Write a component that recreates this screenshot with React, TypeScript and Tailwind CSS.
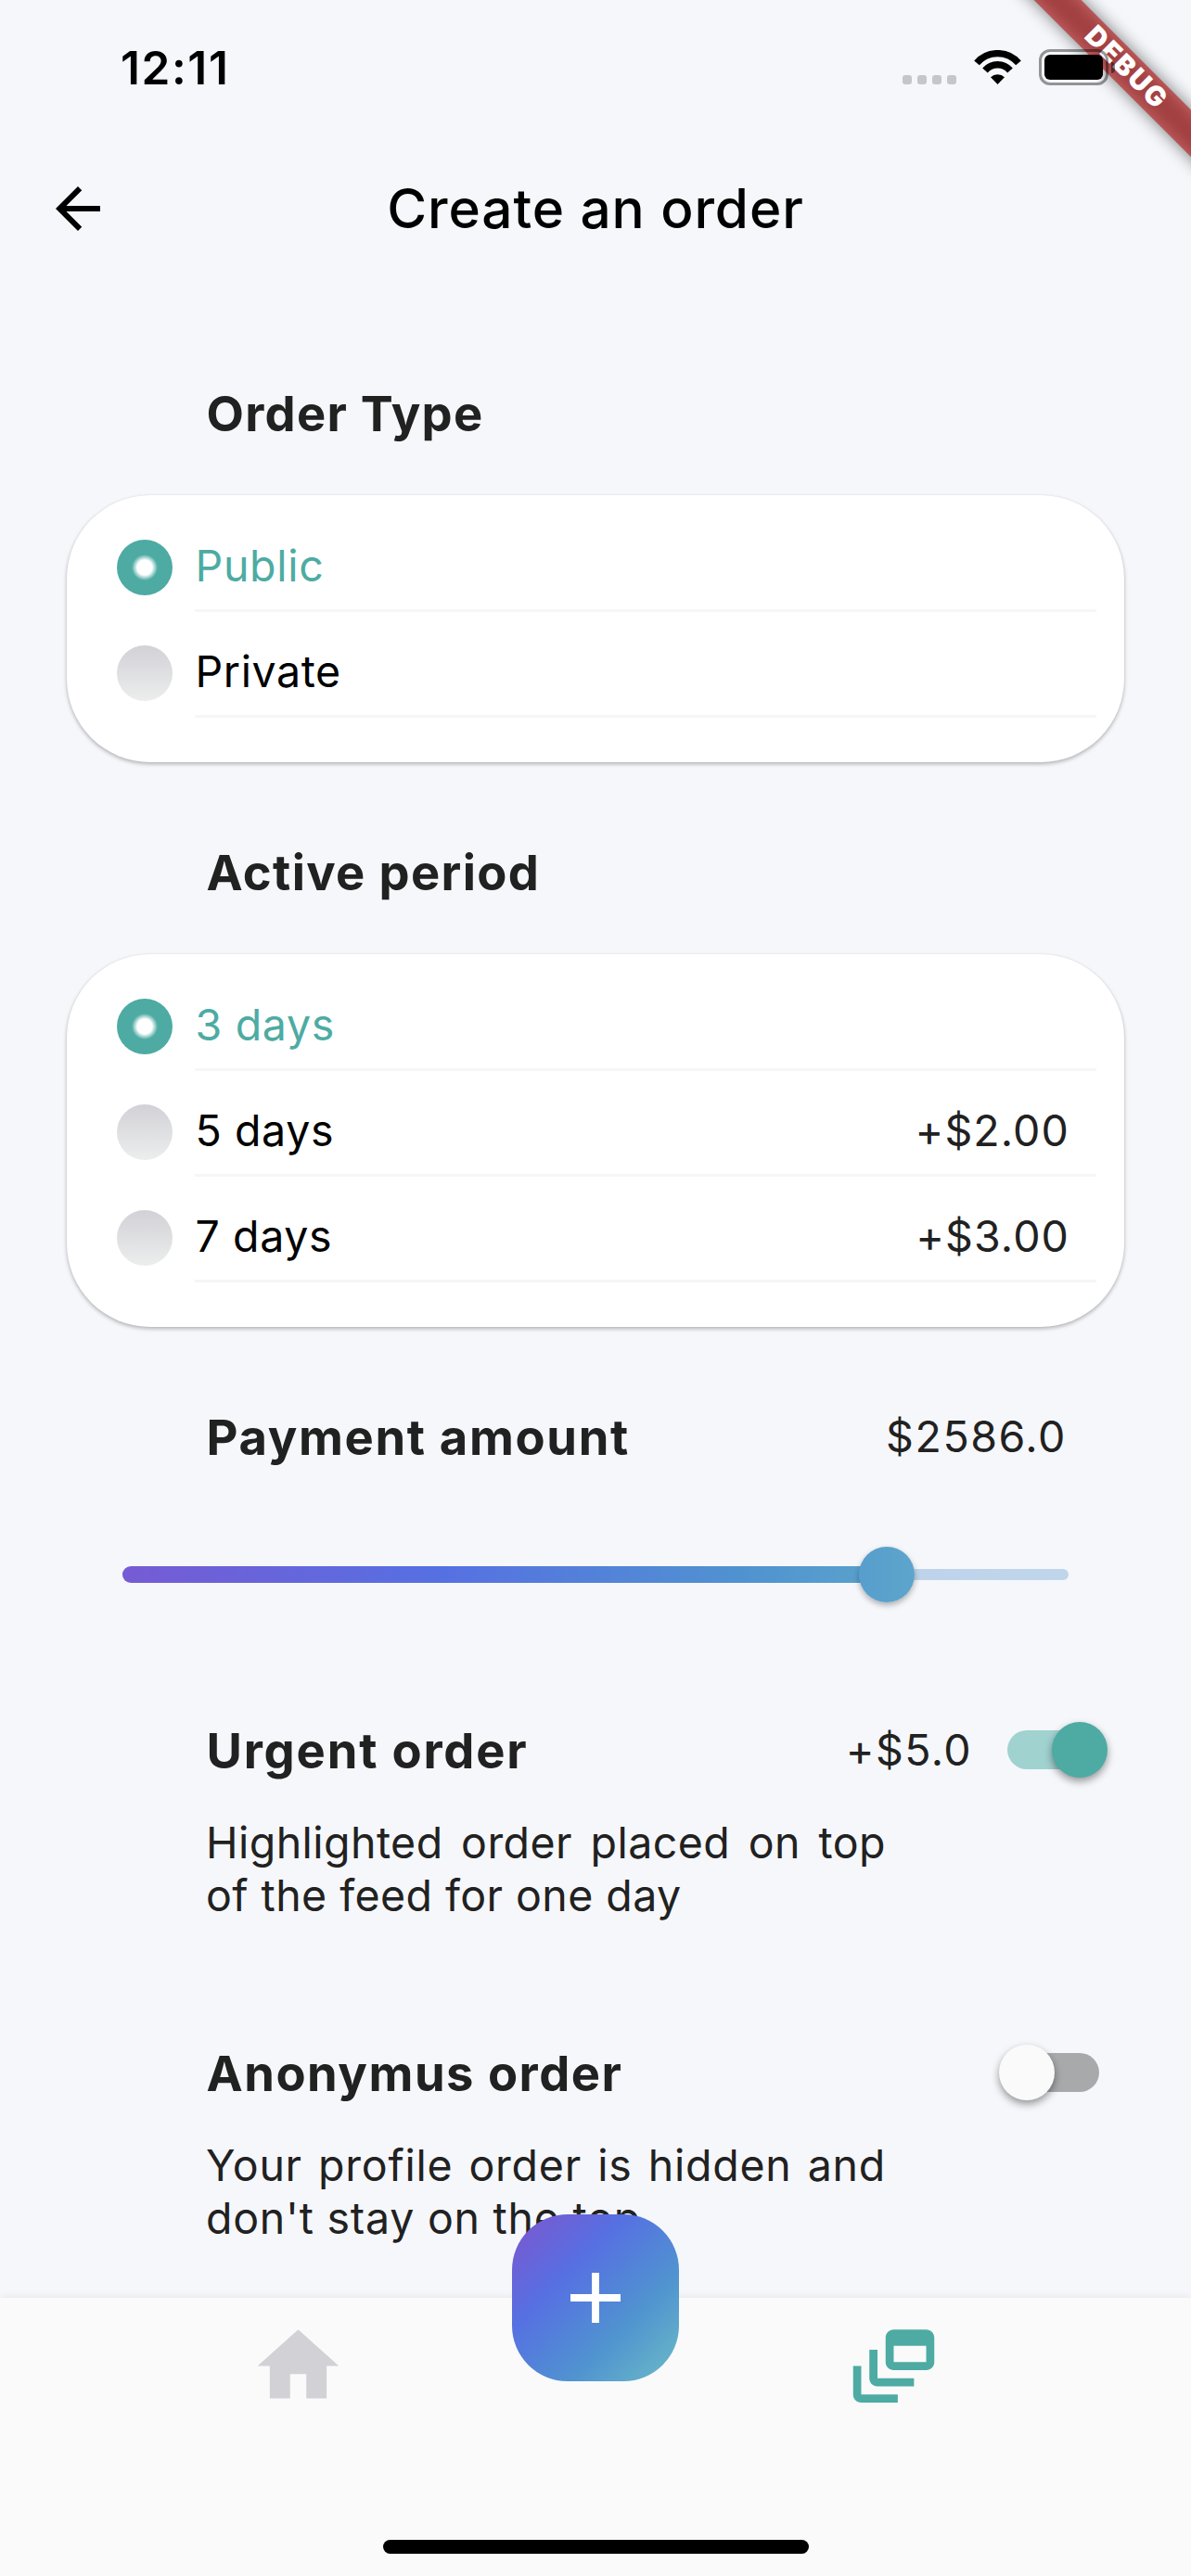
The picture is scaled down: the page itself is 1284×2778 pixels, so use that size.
import type { ReactNode } from "react";
import { MdArrowBack, MdDynamicFeed } from "react-icons/md";

function StatusBar() {
  return (
    <div className="flex h-[141px] shrink-0 items-start justify-between pr-[82px] pl-[130px]">
      <span className="mt-[43px] text-[49.5px] leading-[60px] font-semibold tracking-[1.6px] text-black">12:11</span>
      <div className="relative z-30 mt-[53px] flex h-[39px] items-start">
        <div className="mt-[28px] flex gap-[6px]">
          {[0, 1, 2, 3].map((i) => (
            <span key={i} className="size-[10px] rounded-[3px] bg-[#c5c6ca]" />
          ))}
        </div>
        <svg className="mt-px ml-[19px] h-[37px] w-[51px]" viewBox="0 0 51 37" fill="none">
          <path d="M3 13.9 A29.8 29.8 0 0 1 48 13.9" stroke="#000" strokeWidth="7.4" />
          <path d="M12 22 A17.7 17.7 0 0 1 39 22" stroke="#000" strokeWidth="7.4" />
          <path d="M18 29.3 A11 11 0 0 1 33 29.3 L25.5 37 Z" fill="#000" />
        </svg>
        <div className="ml-[19px] flex items-center">
          <div className="h-[39px] w-[75px] rounded-[12px] border-3 border-black/40 p-[3px]">
            <div className="h-full w-full rounded-[6px] bg-black" />
          </div>
          <div className="ml-[3px] h-[12px] w-[4px] rounded-r-full bg-black/45" />
        </div>
      </div>
    </div>
  );
}

function DebugBanner() {
  return (
    <div className="pointer-events-none absolute top-0 right-0 z-20 size-[240px] overflow-hidden">
      <div className="absolute top-[54.7px] -left-[31px] h-[36.4px] w-[400px] rotate-45 bg-black/50 blur-[9px]" />
      <div className="absolute top-[54.7px] -left-[31px] flex h-[36.4px] w-[400px] rotate-45 items-center justify-center bg-[#b71c1c]/63 pb-[2px]">
        <span className="pl-[2px] text-[29.6px] leading-none font-black tracking-[1.9px] text-white">DEBUG</span>
      </div>
    </div>
  );
}

function Heading({ children, className }: { children: ReactNode; className: string }) {
  return <h2 className={`text-[52.5px] leading-[64px] font-bold whitespace-nowrap text-[#212121] ${className}`}>{children}</h2>;
}

type Option = { label: string; price?: string; selected?: boolean };

function OptionCard({ options }: { options: Option[] }) {
  return (
    <div className="mx-[72px] rounded-[90px] bg-white pt-[12px] pr-[30px] pb-[48px] pl-[54px] shadow-[0_2px_4px_rgba(0,0,0,0.28),0_0_2px_rgba(0,0,0,0.06)]">
      {options.map((o) => (
        <div key={o.label} className="flex h-[114px] gap-[24px]">
          {o.selected ? (
            <span className="mt-[36px] size-[60px] shrink-0 rounded-full bg-[radial-gradient(circle,#ffffff_0px,#ffffff_8px,#4daba3_14px)]" />
          ) : (
            <span className="mt-[36px] size-[60px] shrink-0 rounded-full bg-linear-to-b from-[#d2d1d7] to-[#eceeed]" />
          )}
          <div className="flex flex-1 items-center justify-between border-b-3 border-[#f6f6f7] pt-[18px] pr-[29px] pl-[0.5px] text-[46.5px] leading-[57px]">
            <span className={o.selected ? "tracking-[0.7px] text-[#4daba3]" : "tracking-[0.6px] text-black"}>{o.label}</span>
            <span className="tracking-[1.1px] text-[#212121]">{o.price}</span>
          </div>
        </div>
      ))}
    </div>
  );
}

function Slider() {
  return (
    <div className="relative mx-[132px] flex h-[60px] items-center">
      <div className="h-[12px] w-full rounded-full bg-linear-to-r from-[#b9c6ec] to-[#bfd6ea]" />
      <div className="absolute top-[21px] left-0 h-[18px] w-[825px] rounded-l-full bg-[linear-gradient(90deg,#765bd4_0px,#5670e2_340px,#5093d0_675px,#5ba3cc_825px)]" />
      <div className="absolute top-0 left-[794px] size-[60px] rounded-full bg-linear-to-r from-[#579ecd] to-[#5da5cb] shadow-[0_3px_6px_rgba(0,0,0,0.3)]" />
    </div>
  );
}

function Toggle({ on }: { on?: boolean }) {
  return on ? (
    <div className="relative h-[42px] w-[99px] rounded-full bg-[#a0d2cf]">
      <div className="absolute -top-[9px] left-[48px] size-[60px] rounded-full bg-[#4daba3] shadow-[0_4px_9px_rgba(0,0,0,0.4)]" />
    </div>
  ) : (
    <div className="relative h-[42px] w-[99px] rounded-full bg-[#a8a9aa]">
      <div className="absolute -top-[9px] -left-[9px] size-[60px] rounded-full bg-[#fafafa] shadow-[0_4px_9px_rgba(0,0,0,0.4)]" />
    </div>
  );
}

function BottomNav() {
  return (
    <nav className="absolute inset-x-0 bottom-0 z-10 flex h-[300px] flex-col items-center bg-[#fafafa] shadow-[0_-1px_8px_rgba(0,0,0,0.07)]">
      <div className="flex w-full pt-[21px]">
        <div className="flex flex-1 justify-center">
          <svg className="size-[105px]" viewBox="0 0 24 24" fill="#d1d1d6">
            <path d="M10 20v-6h4v6h5v-8h3L12 3 2 12h3v8z" />
          </svg>
        </div>
        <div className="flex flex-1 justify-center">
          <MdDynamicFeed className="size-[105px] text-[#4daba3]" />
        </div>
      </div>
      <div className="mt-auto mb-[24px] h-[15px] w-[459px] rounded-full bg-black" />
      <button className="absolute -top-[90px] flex size-[180px] items-center justify-center rounded-[60px] bg-[linear-gradient(135deg,#7a58d0_4%,#5670e2_34%,#5093d0_67%,#6cbcc6_100%)]">
        <svg className="size-[54px]" viewBox="0 0 54 54" stroke="#fff" strokeWidth="7.8">
          <path d="M27 0v54M0 27h54" />
        </svg>
      </button>
    </nav>
  );
}

export default function App() {
  return (
    <div className="relative flex h-[2778px] w-[1284px] flex-col overflow-hidden bg-[#f6f7fb] font-[Inter,sans-serif]">
      <StatusBar />
      <DebugBanner />
      <header className="relative flex h-[168px] shrink-0 items-center justify-center">
        <MdArrowBack className="absolute left-[48px] size-[72px] text-black" />
        <h1 className="text-[58.5px] leading-[72px] font-medium tracking-[0.9px] text-black">Create an order</h1>
      </header>

      <main className="flex flex-col">
        <Heading className="mt-[105px] mb-[56px] ml-[222.5px] tracking-[1.25px]">Order Type</Heading>
        <OptionCard options={[{ label: "Public", selected: true }, { label: "Private" }]} />

        <Heading className="mt-[87px] mb-[56px] ml-[222.5px] tracking-[1.35px]">Active period</Heading>
        <OptionCard
          options={[
            { label: "3 days", selected: true },
            { label: "5 days", price: "+$2.00" },
            { label: "7 days", price: "+$3.00" },
          ]}
        />

        <div className="mt-[87px] flex h-[64px] items-center justify-between pr-[134px] pl-[222.5px]">
          <Heading className="tracking-[1.65px]">Payment amount</Heading>
          <span className="pb-[2px] text-[46.5px] leading-[57px] tracking-[1.55px] text-[#212121]">$2586.0</span>
        </div>
        <div className="mt-[86px]">
          <Slider />
        </div>

        <section className="mt-[128px]">
          <div className="flex h-[64px] items-center pr-[99px] pl-[222.5px]">
            <Heading className="flex-1 tracking-[1.8px]">Urgent order</Heading>
            <span className="mr-[38px] pb-[2px] text-[46.5px] leading-[57px] tracking-[1.4px] text-[#212121]">+$5.0</span>
            <div className="pb-[2px]"><Toggle on /></div>
          </div>
          <p className="mt-[39px] ml-[222px] w-[733px] text-justify text-[46.5px] leading-[57px] tracking-[0.44px] text-[#212121]">
            Highlighted order placed on top of the feed for one day
          </p>
        </section>

        <section className="mt-[131px]">
          <div className="flex h-[64px] items-center pr-[99px] pl-[222.5px]">
            <Heading className="flex-1 tracking-[1.5px]">Anonymus order</Heading>
            <div className="pb-[2px]"><Toggle /></div>
          </div>
          <p className="mt-[39px] ml-[222px] w-[733px] text-justify text-[46.5px] leading-[57px] tracking-[0.75px] text-[#212121]">
            Your profile order is hidden and don't stay on the top
          </p>
        </section>
      </main>

      <BottomNav />
    </div>
  );
}
